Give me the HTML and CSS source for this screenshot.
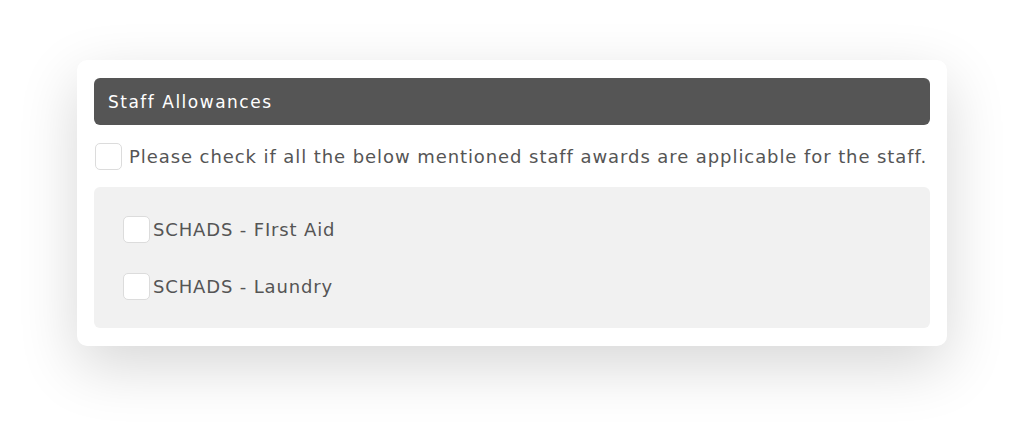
FILE: index.html
```html
<!DOCTYPE html>
<html lang="en">
<head>
    <meta charset="UTF-8">
    <title>Staff Allowances</title>
    <link rel="stylesheet" href="styles.css">
</head>
<body>
    <div class="page">
        <div class="card">
            <div class="card_head">Staff Allowances</div>
            <label class="check_row">
                <span class="check_box"></span>
                <span class="check_text">Please check if all the below mentioned staff awards are applicable for the staff.</span>
            </label>
            <div class="award_list">
                <label class="award_row">
                    <span class="check_box"></span>
                    <span class="award_text">SCHADS - FIrst Aid</span>
                </label>
                <label class="award_row">
                    <span class="check_box"></span>
                    <span class="award_text">SCHADS - Laundry</span>
                </label>
            </div>
        </div>
    </div>
</body>
</html>
```

FILE: styles.css
```css
* {
    box-sizing: border-box;
}
body {
    margin: 0;
    background-color: #fff;
    font-family: "DejaVu Sans", sans-serif;
    color: #555;
}
.page {
    min-height: 440px;
    padding: 60px 77px;
}
.card {
    width: 870px;
    padding: 18px 17px;
    background-color: #fff;
    border-radius: 10px;
    box-shadow: 0 20px 60px rgba(0, 0, 0, 0.16);
}
.card_head {
    display: flex;
    align-items: center;
    height: 47px;
    padding-left: 14px;
    background-color: #555;
    color: #fff;
    font-size: 17px;
    letter-spacing: 1.5px;
    border-radius: 6px;
}
.check_row {
    display: flex;
    align-items: center;
    gap: 7px;
    margin-top: 18px;
    padding-left: 1px;
}
.check_box {
    flex: none;
    width: 27px;
    height: 27px;
    border: 1px solid #dcdcdc;
    border-radius: 5px;
    background-color: #fff;
}
.check_text {
    font-size: 18px;
    letter-spacing: 0.92px;
}
.award_list {
    display: flex;
    flex-direction: column;
    gap: 30px;
    margin-top: 17px;
    padding: 29px 29px 28px;
    background-color: #f1f1f1;
    border-radius: 6px;
}
.award_row {
    display: flex;
    align-items: center;
    gap: 3px;
}
.award_text {
    font-size: 18px;
    letter-spacing: 0.85px;
}
```
